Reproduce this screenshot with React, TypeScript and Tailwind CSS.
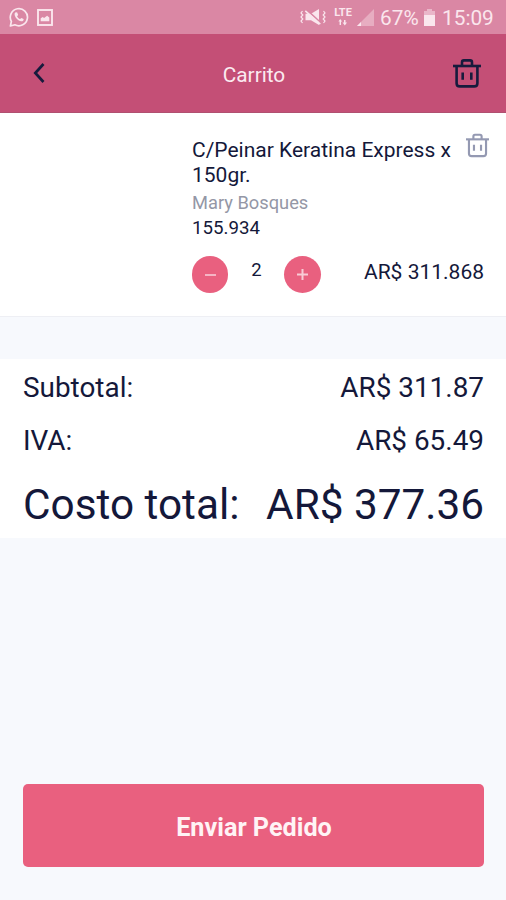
import React from 'react';

function WhatsAppIcon() {
  return (
    <svg className="h-5 w-5" viewBox="0 0 20 20" fill="none">
      <path d="M1.4 19 2.4 14.4A8.6 8.6 0 1 1 5.9 17.8Z" stroke="currentColor" strokeWidth="1.7" strokeLinejoin="round" />
      <path d="M7 5.2c-.9.3-1.6 1.2-1.4 2.3.4 3.2 3.4 6.2 6.6 6.8 1.1.2 2.1-.4 2.4-1.5v-.7l-2.2-1.2-1.3 1.2c-1.4-.6-2.4-1.6-3-2.9L9.2 8l-1-2.6Z" fill="currentColor" />
    </svg>
  );
}

function PictureIcon() {
  return (
    <svg className="h-[17px] w-4" viewBox="0 0 16 17" fill="none">
      <rect x="1" y="1" width="14" height="15" stroke="currentColor" strokeWidth="1.9" />
      <path d="M3.7 12.3V9.2l2-1.3 1.4 1 3-2.2 2.2 1.7v3.9Z" fill="currentColor" />
    </svg>
  );
}

function VibrateMuteIcon() {
  return (
    <svg className="h-[18px] w-[26px]" viewBox="0 0 26 18" fill="none" stroke="currentColor">
      <path d="M2.5 3 1 5l1.8 2L1 9l1.8 2L1 13l1.5 2M23.5 3 25 5l-1.8 2L25 9l-1.8 2L25 13l-1.5 2" strokeWidth="1.2" />
      <path d="M5.5 5.7H11L19 1v16l-8-4.7H5.5Z" fill="currentColor" stroke="none" />
      <path d="m7 2.2 14 12.6" stroke="#da87a4" strokeWidth="1.6" />
      <path d="m5.3 2.8 15 13.4" strokeWidth="1.6" />
    </svg>
  );
}

function LteIcon() {
  return (
    <div className="flex w-[18px] flex-col items-center">
      <span className="text-[11px] font-bold leading-[10px]">LTE</span>
      <svg className="mt-[1px] h-[7px] w-[10px]" viewBox="0 0 10 7" fill="currentColor">
        <path d="M2.2 0 4.2 2.5H3V6H1.6V2.5H.4ZM6 1h1.5v2.6H9L6.8 6.4 4.6 3.6H6Z" />
      </svg>
    </div>
  );
}

function SignalIcon() {
  return (
    <svg className="h-[17px] w-[17px]" viewBox="0 0 17 17" fill="currentColor">
      <path d="M0 17 17 0v17Z" opacity=".4" />
      <path d="M0 17 4 13v4Z" />
    </svg>
  );
}

function BatteryIcon() {
  return (
    <svg className="h-[17px] w-[11px]" viewBox="0 0 11 17" fill="currentColor">
      <path d="M3 0h5v2h3v4H0V2h3Z" opacity=".5" />
      <path d="M0 6h11v11H0Z" />
    </svg>
  );
}

function TrashIcon({ className }: { className: string }) {
  return (
    <svg className={className} viewBox="0 0 28 29" fill="none" stroke="currentColor" strokeWidth="2.6">
      <path d="M0 7h28" />
      <path d="M9 7V3.4c0-1.2.7-2 1.9-2h6.2c1.2 0 1.9.8 1.9 2V7" />
      <path d="M3.6 7v17.2c0 2 1.2 3.2 3.2 3.2h14.4c2 0 3.2-1.2 3.2-3.2V7" />
      <path d="M9.7 13.5v7.3M18.3 13.5v7.3" />
    </svg>
  );
}

function StatusBar() {
  return (
    <div className="flex h-[34px] items-center bg-[#da87a4] pl-[9px] text-[#fae6ed]">
      <WhatsAppIcon />
      <div className="ml-2"><PictureIcon /></div>
      <div className="ml-[247px]"><VibrateMuteIcon /></div>
      <div className="ml-[8px]"><LteIcon /></div>
      <div className="ml-[5px]"><SignalIcon /></div>
      <span className="ml-[6px] mt-[1px] w-[44px] whitespace-nowrap text-[20.8px] leading-[34px]">67%</span>
      <div><BatteryIcon /></div>
      <span className="ml-[7px] mt-[1px] whitespace-nowrap text-[20.8px] leading-[34px]">15:09</span>
    </div>
  );
}

function Header() {
  return (
    <header className="flex h-[79px] items-center justify-between border-b border-[#b05070] bg-[#c44f76] pl-[33px] pr-[25px] text-[#171b3d]">
      <svg className="h-5 w-[12px]" viewBox="0 0 12 20" fill="none" stroke="currentColor" strokeWidth="2.7">
        <path d="M10.5 1 2.3 10l8.2 9" />
      </svg>
      <h1 className="ml-[10px] mt-[4px] text-[20.8px] leading-6 text-[#fbeaf0]">Carrito</h1>
      <TrashIcon className="h-[29px] w-[28px]" />
    </header>
  );
}

function CartItem() {
  return (
    <section className="flex h-[204px] border-b border-[#eeeff4] bg-white pl-[192px] pr-[17px] pt-[20px]">
      <div className="flex-1">
        <div className="flex justify-between">
          <h2 className="whitespace-nowrap pt-[5px] text-[21px] leading-[25px]">
            C/Peinar Keratina Express x<br />150gr.
          </h2>
          <TrashIcon className="h-[25px] w-[23px] shrink-0 text-[#9499b2]" />
        </div>
        <p className="mt-[2px] text-[18.3px] leading-[25px] text-[#9497a6]">Mary Bosques</p>
        <p className="pt-[1px] text-[18.7px] leading-[25px]">155.934</p>
        <div className="mt-[15px] flex items-start pr-[5px]">
          <button className="flex h-[37px] w-[36px] items-center justify-center rounded-full bg-[#e9607f]">
            <span className="h-[2px] w-[11px] bg-[#f5b4c4]" />
          </button>
          <span className="w-[56px] pl-px text-center text-[18.5px] leading-[29px]">2</span>
          <button className="flex h-[37px] w-[37px] items-center justify-center rounded-full bg-[#e9607f]">
            <svg className="h-[11px] w-[11px]" viewBox="0 0 11 11" stroke="#f8cbd6" strokeWidth="2">
              <path d="M5.5 0v11M0 5.5h11" />
            </svg>
          </button>
          <span className="ml-auto text-[21px] leading-[32px]">AR$ 311.868</span>
        </div>
      </div>
    </section>
  );
}

function Totals() {
  return (
    <section className="mt-[42px] h-[179px] bg-white pl-[23px] pr-[22px] pt-[2px]">
      <div className="flex h-[53px] items-center justify-between text-[27.9px]">
        <span>Subtotal:</span>
        <span>AR$ 311.87</span>
      </div>
      <div className="flex h-[53px] items-center justify-between text-[27.9px]">
        <span>IVA:</span>
        <span>AR$ 65.49</span>
      </div>
      <div className="flex h-[75px] items-center justify-between whitespace-nowrap text-[42.3px]">
        <span>Costo total:</span>
        <span>AR$ 377.36</span>
      </div>
    </section>
  );
}

export default function App() {
  return (
    <main className="flex h-[900px] w-[506px] flex-col overflow-hidden bg-[#f7f9fd] font-['Roboto',sans-serif] text-[#14183a]">
      <StatusBar />
      <Header />
      <CartItem />
      <Totals />
      <button className="mb-[33px] ml-[23px] mr-[22px] mt-auto h-[83px] rounded-[5px] bg-[#e9607f] pl-px pt-[4px] text-[25.2px] font-bold text-[#fff3f5]">
        Enviar Pedido
      </button>
    </main>
  );
}
